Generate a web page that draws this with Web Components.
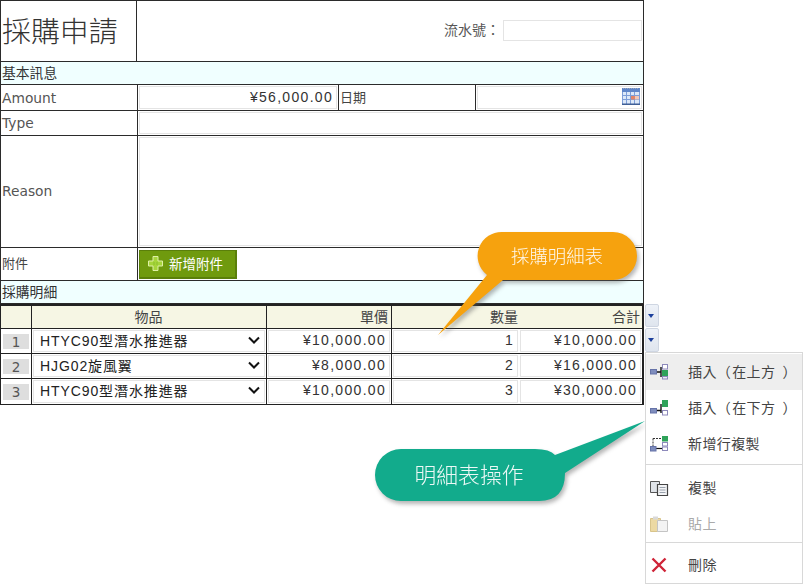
<!DOCTYPE html>
<html><head><meta charset="utf-8">
<style>
html,body{margin:0;padding:0;background:#fff}
body{width:803px;height:584px;overflow:hidden;font-family:"Noto Sans CJK TC","Liberation Sans",sans-serif}
</style></head><body>
<pr-app>
  <pr-form>
    <pr-title-row title-text="採購申請" serial-label="流水號："></pr-title-row>
    <pr-section>基本訊息</pr-section>
    <pr-row h="26">
      <pr-cell w="137" latin style="padding-bottom:0">Amount</pr-cell>
      <pr-cell w="201" boxed value>¥56,000.00</pr-cell>
      <pr-cell w="137">日期</pr-cell>
      <pr-cell grow boxed cal></pr-cell>
    </pr-row>
    <pr-row h="25">
      <pr-cell w="137" latin>Type</pr-cell>
      <pr-cell grow boxed></pr-cell>
    </pr-row>
    <pr-row h="112">
      <pr-cell w="137" latin>Reason</pr-cell>
      <pr-cell grow boxed></pr-cell>
    </pr-row>
    <pr-row h="33">
      <pr-cell w="137" style="padding-bottom:4px">附件</pr-cell>
      <pr-cell grow><pr-add-button>新增附件</pr-add-button></pr-cell>
    </pr-row>
    <pr-section>採購明細</pr-section>
    <pr-detail></pr-detail>
  </pr-form>
  <pr-row-buttons></pr-row-buttons>
  <pr-callout color="#f6a20e" x="430" y="226" w="215" h="116" text-x="80" text-y="6" text-w="94" text-h="46" fs="18.4"
     d="M73 6H183A24 24 0 0 1 183 54H73L8 109L57 49A24 24 0 0 1 73 6Z">採購明細表</pr-callout>
  <pr-callout color="#12ab8c" x="370" y="416" w="280" h="92" text-x="44" text-y="33" text-w="110" text-h="50" fs="21.8"
     d="M31 33H165Q180 33 185 39L275 5L195 57Q195 85 169 85H31A26 26 0 0 1 31 33Z">明細表操作</pr-callout>
  <pr-menu></pr-menu>
</pr-app>
<script>
function def(name, css, html, init){
  customElements.define(name, class extends HTMLElement{
    constructor(){super();const r=this.attachShadow({mode:'open'});r.innerHTML='<style>'+css+'</style>'+(typeof html==='function'?'':html);}
    connectedCallback(){
      const r=this.shadowRoot;
      if(typeof html==='function'&&!this._d){this._d=1;r.innerHTML='<style>'+css+'</style>'+html(this);}
      if(init)init(this);
    }
  });
}
const CJK='"Noto Sans CJK TC","Liberation Sans",sans-serif';
const LINE='#2b2b2b';
def('pr-app',':host{display:block;position:relative;width:803px;height:584px;overflow:hidden}','<slot></slot>');
def('pr-form',`:host{display:flex;flex-direction:column;width:644px;border:solid ${LINE};border-width:1px 0 0 0;box-sizing:border-box;color:#333;font-size:13px}`,'<slot></slot>');
def('pr-title-row',`:host{display:flex;height:61px;border:solid ${LINE};border-width:0 1px 1px 1px;box-sizing:border-box}
 .t{width:136px;border-right:1px solid ${LINE};display:flex;align-items:center;padding:0 0 4px 1px;box-sizing:border-box;font:300 28.9px/1 ${CJK};color:#333}
 .s{flex:1;display:flex;align-items:center;justify-content:flex-end;padding-right:1px;gap:3px;font:14px ${CJK};color:#555}
 .i{width:139px;height:21px;border:1px solid #e4e4e4;box-sizing:border-box;background:#fff;margin-bottom:1px}
 .l{margin-bottom:5px}`,
 h=>`<div class="t">${h.getAttribute('title-text')}</div><div class="s"><span class="l">${h.getAttribute('serial-label')}</span><div class="i"></div></div>`);
def('pr-section',`:host{display:flex;align-items:center;height:23px;background:#f0ffff;border:solid ${LINE};border-width:0 1px 1px 1px;box-sizing:border-box;padding:0 0 3px 1px;font:13.8px ${CJK};color:#333}`,'<slot></slot>');
customElements.define('pr-row',class extends HTMLElement{
 constructor(){super();this.attachShadow({mode:'open'}).innerHTML=`<style>:host{display:flex;box-sizing:border-box;border:solid ${LINE};border-width:0 1px 1px 1px}</style><slot></slot>`;}
 connectedCallback(){this.style.height=this.getAttribute('h')+'px';}
});
customElements.define('pr-cell',class extends HTMLElement{
 constructor(){super();const r=this.attachShadow({mode:'open'});r.innerHTML=`<style>
 :host{display:flex;box-sizing:border-box;border-right:1px solid ${LINE};align-items:center;padding:0 0 2px 1px;font:13px ${CJK};color:#444;min-width:0}
 :host(:last-child){border-right:0}
 :host([latin]){font:13.8px "DejaVu Sans",sans-serif;color:#555;padding-bottom:1px}
 :host([grow]){flex:1}
 :host([boxed]){padding:1px;align-items:stretch}
 .b{flex:1;border:1px solid #e4e4e4;background:#fff;display:flex;align-items:center;justify-content:flex-end;padding:0 3px 1px 0;font:14px "Liberation Sans",${CJK};letter-spacing:1.3px;color:#333;position:relative}
 .c{position:absolute;right:1px;top:1px;display:block}
 </style>`;
 const boxed=this.hasAttribute('boxed');
 const wrap=document.createElement(boxed?'div':'span');
 if(boxed)wrap.className='b';
 if(this.hasAttribute('cal'))wrap.innerHTML=`<svg class="c" width="18" height="17" viewBox="0 0 18 17"><rect width="18" height="17" fill="#dce8f8"/><rect width="18" height="4" fill="#5f86c9"/><path d="M1 .5h16" stroke="#9aa6bb" stroke-dasharray="1 1"/><path d="M.5 4v13M4.5 4v12M8.5 4v12M12.5 4v12M17.5 4v13M0 7.5h18M0 11.5h18" stroke="#7d9ed8"/><rect x="9" y="8" width="4" height="3.5" fill="#e0866a"/><rect x="13" y="8" width="4" height="3.5" fill="#f0c8b8"/><rect y="15.5" width="18" height="1.5" fill="#3f5f96"/></svg>`;
 else wrap.innerHTML='<slot></slot>';
 r.appendChild(wrap);}
 connectedCallback(){if(this.hasAttribute('w'))this.style.width=this.getAttribute('w')+'px';}
});
def('pr-add-button',`:host{display:inline-flex;align-items:center;box-sizing:border-box;width:98px;height:29px;margin-top:2px;background:#6f9a0e;border:1px solid #5a7f0a;border-width:1px 2px 2px 1px;color:#fff;font:13.5px ${CJK};padding:0 0 1px 7px;gap:5px}`,
 `<svg width="17" height="17" viewBox="0 0 17 17"><path d="M6 1.5h5V6h4.5v5H11v4.5H6V11H1.5V6H6z" fill="#a6d53a" stroke="#dff0a6" stroke-width="1"/><path d="M7 7v3M10 7v3" stroke="#7fb82a" stroke-width=".7"/></svg><span><slot></slot></span>`);
const rows=[['1','HTYC90型潛水推進器','¥10,000.00','1','¥10,000.00'],['2','HJG02旋風翼','¥8,000.00','2','¥16,000.00'],['3','HTYC90型潛水推進器','¥10,000.00','3','¥30,000.00']];
def('pr-detail',`:host{display:grid;grid-template-columns:31px 235px 125px 127px 1fr;grid-template-rows:23px 25px 25px 25px;width:644px;box-sizing:border-box;border:solid #222;border-width:2px 1px 1px 1px;font:14px ${CJK};color:#444}
 .h{background:#f6f6e4;display:flex;align-items:center;justify-content:flex-end;padding:0 2px 3px 0;border-right:1px solid #222;border-bottom:1px solid #222;box-sizing:border-box}
 .h.c{justify-content:center;padding-left:1px}
 .h:nth-child(4){padding-right:3px}
 .h:nth-child(5){padding-right:1px}
 .d{border-right:1px solid #222;border-bottom:1px solid #222;box-sizing:border-box;padding:1px;display:flex}
 .d:nth-last-child(-n+5){border-bottom:0}
 .h:nth-child(5n),.d:nth-child(5n){border-right:0}
 .n{flex:1;background:#dedede;margin:4px 1px 3px 1px;color:#555;display:flex;align-items:center;justify-content:center;font:13.5px "DejaVu Sans",sans-serif}
 .b{flex:1;border:1px solid #e4e4e4;display:flex;align-items:center;justify-content:flex-end;padding:0 3px 3px 0;font:14px "Liberation Sans",${CJK};letter-spacing:1.3px;color:#333;min-width:0}
 .s{justify-content:space-between;padding:0 4px 3px 6px;letter-spacing:.9px;color:#222}
 .s span{white-space:nowrap}`,
 `<div class="h"></div><div class="h c">物品</div><div class="h">單價</div><div class="h">數量</div><div class="h">合計</div>`+
 rows.map(r=>`<div class="d"><div class="n">${r[0]}</div></div><div class="d"><div class="b s"><span>${r[1]}</span><svg width="12" height="8" viewBox="0 0 12 8"><path d="M1 1.5l5 5 5-5" fill="none" stroke="#111" stroke-width="2"/></svg></div></div><div class="d"><div class="b">${r[2]}</div></div><div class="d"><div class="b">${r[3]}</div></div><div class="d"><div class="b">${r[4]}</div></div>`).join(''));
const tri=`<svg width="6" height="4" viewBox="0 0 6 4"><path d="M0 0h6L3 4z" fill="#1c3f9c"/></svg>`;
def('pr-row-buttons',`:host{position:absolute;left:645px;top:304px;display:flex;flex-direction:column;gap:1px}
 .b{width:14px;height:23px;box-sizing:border-box;border:1px solid #cfd6e2;border-radius:2px;background:linear-gradient(#eef2f8,#dfe5ee);display:flex;align-items:center;justify-content:center;padding-right:2px}`,
 `<div class="b">${tri}</div><div class="b" style="height:24px">${tri}</div>`);
customElements.define('pr-callout',class extends HTMLElement{
 constructor(){super();this.attachShadow({mode:'open'});}
 connectedCallback(){const g=k=>this.getAttribute(k);
 this.shadowRoot.innerHTML=`<style>:host{position:absolute;left:${g('x')}px;top:${g('y')}px;width:${g('w')}px;height:${g('h')}px;display:block}
 svg{position:absolute;left:0;top:0;overflow:visible;filter:drop-shadow(2px 3px 2px rgba(90,90,90,.45))}
 .t{position:absolute;left:${g('text-x')}px;top:${g('text-y')}px;width:${g('text-w')}px;height:${g('text-h')}px;display:flex;align-items:center;justify-content:center;white-space:nowrap;color:#fff;font:300 ${g('fs')}px/1 ${CJK};opacity:.92}</style>
 <svg width="${g('w')}" height="${g('h')}"><path d="${g('d')}" fill="${g('color')}"/></svg><div class="t"><slot></slot></div>`;}
});
const ic={
 up:`<svg width="20" height="18" viewBox="0 0 20 18"><path d="M8 9h4M12 4v10" stroke="#111" stroke-width="1.4" fill="none"/><rect x="1.5" y="6.5" width="6" height="4.5" fill="#7f8dbd" stroke="#6673a8"/><rect x="13.5" y="1.5" width="5" height="4.5" fill="#fff" stroke="#8d89bb"/><rect x="13" y="7" width="6" height="6" fill="#2fa35a"/><rect x="13.5" y="13.5" width="5" height="2.5" fill="#eceaf6" stroke="#8d89bb"/></svg>`,
 dn:`<svg width="20" height="18" viewBox="0 0 20 18"><path d="M8 11.5h4M12 5v9" stroke="#111" stroke-width="1.4" fill="none"/><rect x="1.5" y="9.5" width="6" height="4.5" fill="#7f8dbd" stroke="#6673a8"/><rect x="13" y="1" width="6" height="7" fill="#2fa35a"/><rect x="13.5" y="11.5" width="5" height="4.5" fill="#fff" stroke="#8d89bb"/></svg>`,
 dup:`<svg width="20" height="18" viewBox="0 0 20 18"><path d="M4 3.5h8M4 3.5v8" stroke="#333" stroke-dasharray="2 1" fill="none"/><path d="M7 13.5h6" stroke="#111" stroke-width="1.2" fill="none"/><rect x="1.5" y="11.5" width="5.5" height="4.5" fill="#7f8dbd" stroke="#6673a8"/><rect x="13" y="1" width="6" height="5.5" fill="#2fa35a"/><rect x="13.5" y="7.5" width="5" height="3.5" fill="#fff" stroke="#8d89bb"/><rect x="13.5" y="12" width="5" height="3.5" fill="#fff" stroke="#8d89bb"/></svg>`,
 copy:`<svg width="20" height="18" viewBox="0 0 20 18"><path d="M1.5 2.5h9v11h-9z" fill="#dfe3e8" stroke="#555"/><path d="M8.5 5.5h10v11h-10z" fill="#f3f4f6" stroke="#444" stroke-width="1.2"/><path d="M10.5 8.5h6M10.5 11h6M10.5 13.5h6" stroke="#9aa2ad"/></svg>`,
 paste:`<svg width="20" height="18" viewBox="0 0 20 18"><path d="M1.5 3.5h10v13h-10z" fill="#ecd9a3" stroke="#d8c48b"/><rect x="4" y="1.5" width="5" height="3" fill="#d9d9d9"/><path d="M8.5 5.5h10v11h-10z" fill="#f3f3f3" stroke="#c4c4c4"/></svg>`,
 del:`<svg width="20" height="18" viewBox="0 0 20 18"><path d="M3.5 2.5l13 13M16.5 2.5l-13 13" stroke="#cf2438" stroke-width="2.4" fill="none"/></svg>`};
const mi=(i,t,cls='')=>`<div class="i ${cls}"><span class="ic">${ic[i]}</span><span class="tx">${t}</span></div>`;
def('pr-menu',`:host{position:absolute;left:645px;top:352px;width:158px;height:232px;box-sizing:border-box;background:#fff;border:1px solid #d8d8d8;padding-top:1px;font:14px ${CJK};color:#444;display:block}
 .i{height:36px;display:flex;align-items:center;letter-spacing:.4px}
 .ic{width:42px;padding-left:3px;box-sizing:border-box;display:flex}
 .tx{padding-bottom:2px}
 .po{margin-right:1px}
 .pc{margin-left:7px}
 .hi{background:#eeeeee}
 .dis{color:#aaa}
 .sep{height:1px;background:#d8d8d8;margin:2px 0 5px}
 .sep2{height:1px;background:#d8d8d8;margin:0 0 4px}
 svg{display:block}`,
 mi('up','插入<span class="po">（</span>在上方<span class="pc">）</span>','hi')+mi('dn','插入<span class="po">（</span>在下方<span class="pc">）</span>')+mi('dup','新增行複製')+'<div class="sep"></div>'+mi('copy','複製')+mi('paste','貼上','dis')+'<div class="sep2"></div>'+mi('del','刪除'));
</script>
</body></html>
